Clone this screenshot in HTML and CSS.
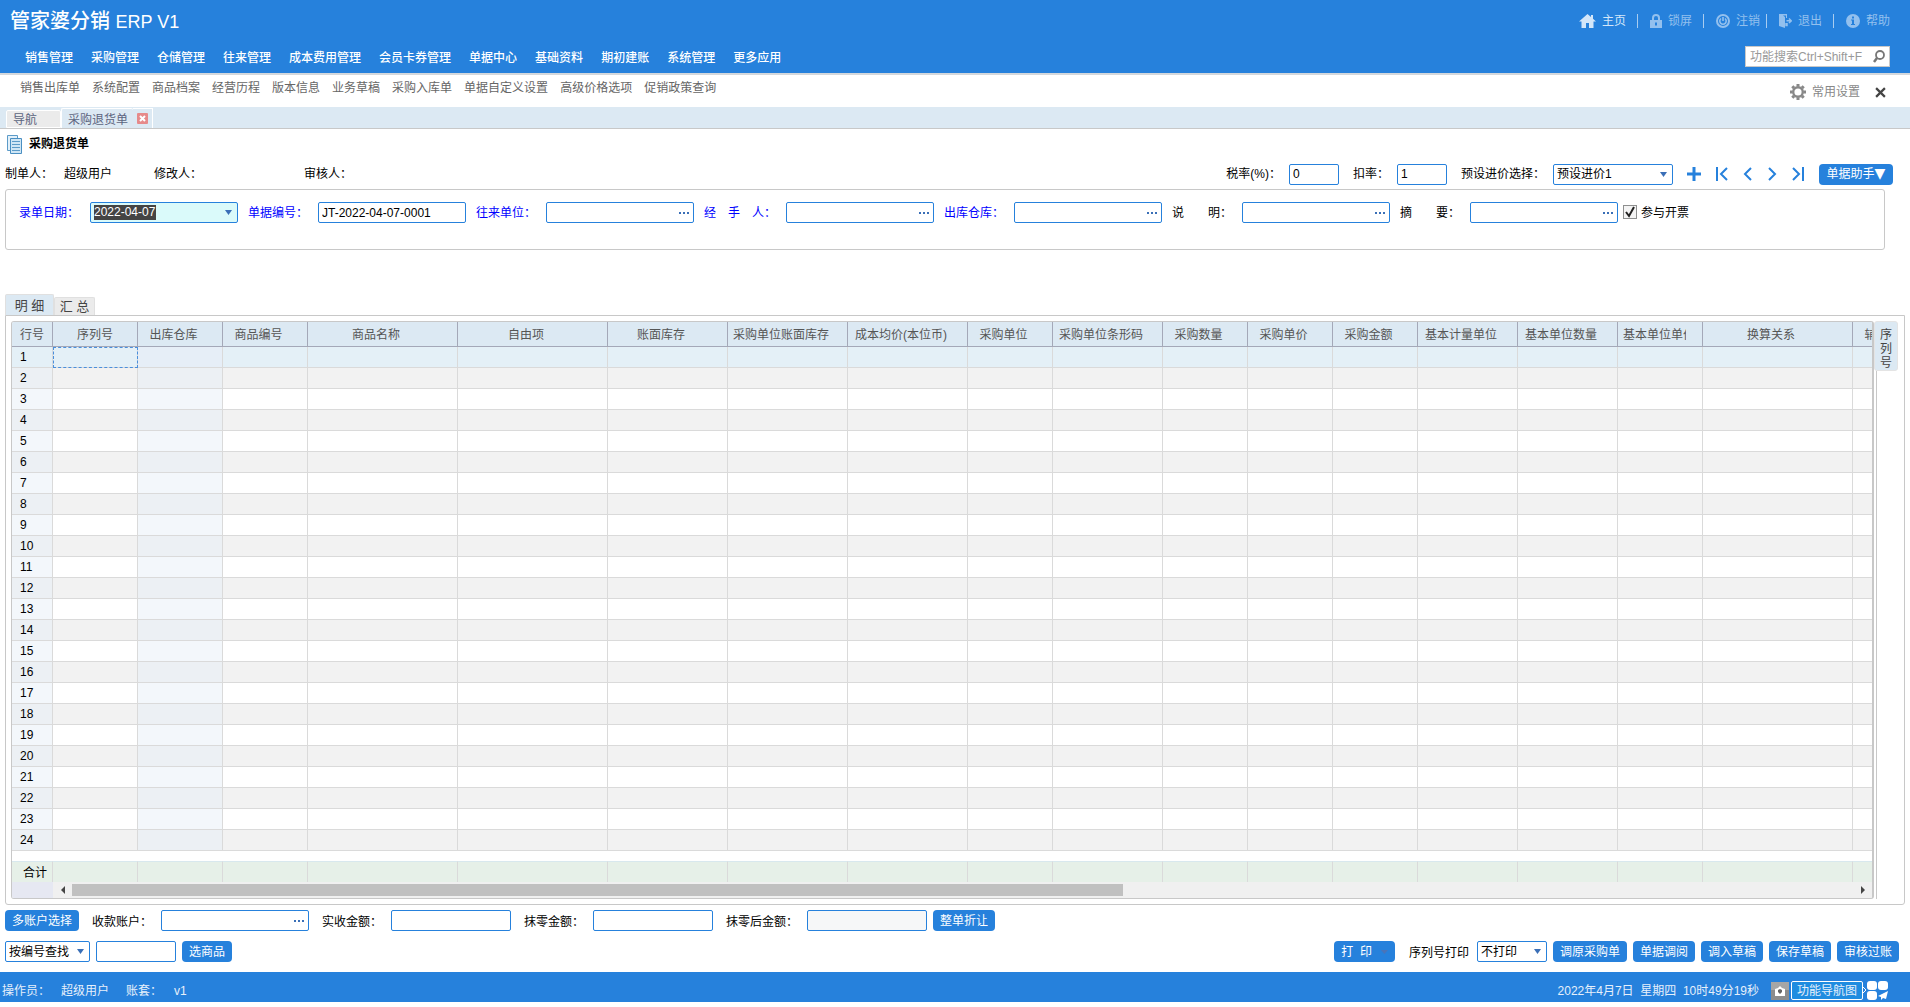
FILE: index.html
```
<!DOCTYPE html>
<html lang="zh-CN">
<head>
    <meta charset="UTF-8">
    <meta name="viewport" content="width=device-width, initial-scale=1.0">
    <title>管家婆分销 ERP V1</title>
    <link rel="stylesheet" href="styles.css">
</head>
<body>
    <!-- Header -->
    <header class="header">
        <div class="header-row brand-row">
            <h1 class="brand">管家婆分销 <span>ERP V1</span></h1>
            <nav class="user-links">
                <a href="#" class="active"><svg width="17" height="14" viewBox="0 0 17 14"><path fill="currentColor" d="M8.5 0 0 7.5h2.5V14H7V9h3v5h4.500V7.500H17L14 4.800V1h-2v2z"/></svg>主页</a>
                <a href="#"><svg width="12" height="14" viewBox="0 0 12 14"><path fill="none" stroke="currentColor" stroke-width="2" d="M3 7V4a3 3 0 0 1 6 0v3"/><path fill="currentColor" fill-rule="evenodd" d="M0 6h12v8H0zm5 2.500v3h2v-3z"/></svg>锁屏</a>
                <a href="#"><svg width="14" height="14" viewBox="0 0 14 14"><circle cx="7" cy="7" r="6" fill="none" stroke="currentColor" stroke-width="2"/><path fill="none" stroke="currentColor" stroke-width="1.600" d="M5 4.500a3.200 3.200 0 1 0 4 0M7 3v4"/></svg>注销</a>
                <a href="#" class="tight"><svg width="13" height="14" viewBox="0 0 13 14"><path fill="currentColor" d="M0 0h8v4H7V1.500H4L6 3v11l-6-2z"/><path fill="none" stroke="currentColor" stroke-width="1.500" d="M7 9v2.500h1V9M7.500 6.800H12M10 4.500l2.300 2.300L10 9"/></svg>退出</a>
                <a href="#"><svg width="14" height="14" viewBox="0 0 14 14"><circle cx="7" cy="7" r="7" fill="currentColor"/><path fill="#2681dc" d="M6 2.500h2v2H6zM5 5.500h3V10h1v1H5v-1h1V6.500H5z"/></svg>帮助</a>
            </nav>
        </div>
        <div class="header-row">
            <nav class="main-menu">
                <a href="#">销售管理</a>
                <a href="#">采购管理</a>
                <a href="#">仓储管理</a>
                <a href="#">往来管理</a>
                <a href="#">成本费用管理</a>
                <a href="#">会员卡券管理</a>
                <a href="#">单据中心</a>
                <a href="#">基础资料</a>
                <a href="#">期初建账</a>
                <a href="#">系统管理</a>
                <a href="#">更多应用</a>
            </nav>
            <div class="search">
                <input type="text" placeholder="功能搜索Ctrl+Shift+F" aria-label="功能搜索">
                <button type="button" aria-label="搜索"><svg width="12" height="13" viewBox="0 0 12 13"><circle cx="7" cy="5" r="4" fill="none" stroke="#777" stroke-width="1.800"/><path stroke="#777" stroke-width="2.500" d="M4 8 1 12"/></svg></button>
            </div>
        </div>
    </header>

    <!-- Shortcuts -->
    <div class="toolbar">
        <nav class="shortcuts">
            <a href="#">销售出库单</a>
            <a href="#">系统配置</a>
            <a href="#">商品档案</a>
            <a href="#">经营历程</a>
            <a href="#">版本信息</a>
            <a href="#">业务草稿</a>
            <a href="#">采购入库单</a>
            <a href="#">单据自定义设置</a>
            <a href="#">高级价格选项</a>
            <a href="#">促销政策查询</a>
        </nav>
        <div class="toolbar-right">
            <a href="#"><svg width="16" height="16" viewBox="0 0 16 16"><circle cx="8" cy="8" r="4.800" fill="none" stroke="#888" stroke-width="2.400"/><path stroke="#888" stroke-width="3" d="M8 0v2.500M8 13.500V16M0 8h2.500M13.500 8H16M2.300 2.300l1.800 1.800M11.900 11.900l1.800 1.800M2.300 13.700l1.800-1.800M11.900 4.100l1.800-1.800"/></svg>常用设置</a>
            <button type="button" aria-label="关闭"><svg width="11" height="11" viewBox="0 0 10 10"><path stroke="#444" stroke-width="2" d="M1 1l8 8M9 1 1 9"/></svg></button>
        </div>
    </div>

    <!-- Page tabs -->
    <div class="page-tabs">
        <a href="#" class="page-tab">导航</a>
        <a href="#" class="page-tab current">采购退货单</a>
        <button type="button" class="tab-close" aria-label="关闭采购退货单"><svg width="11" height="11" viewBox="0 0 11 11"><rect width="11" height="11" rx="1" fill="#e68a8a"/><path stroke="#fff" stroke-width="2" d="M3 3l5 5M8 3 3 8"/></svg></button>
    </div>

    <main>
        <div class="doc-title">
            <svg width="15" height="19" viewBox="0 0 15 19"><path fill="#e3f1fa" stroke="#5c9bc8" d="M.5.500h10v15H.5z"/><path fill="#cfe6f5" stroke="#4a8fc2" d="M3.500 3.500h11v15h-11z"/><path stroke="#5c9bc8" d="M5 6.500h8M5 9.500h8M5 12.500h8M5 15.500h8"/></svg>
            <h2>采购退货单</h2>
        </div>

        <div class="doc-info">
            <div class="makers">
                <span>制单人：</span>
                <span class="maker-name">超级用户</span>
                <span class="editor">修改人：</span>
                <span>审核人：</span>
            </div>
            <div class="doc-options">
                <label for="tax">税率(%)：</label>
                <input type="text" id="tax" class="box short" value="0">
                <label for="discount">扣率：</label>
                <input type="text" id="discount" class="box short" value="1">
                <label for="price">预设进价选择：</label>
                <select id="price" class="box price"><option>预设进价1</option></select>
                <div class="pager">
                    <button type="button" aria-label="新增"><svg width="14" height="14" viewBox="0 0 14 14"><path stroke="#2681dc" stroke-width="3" d="M7 0v14M0 7h14"/></svg></button>
                    <button type="button" aria-label="第一张"><svg width="14" height="14" viewBox="0 0 14 14"><path fill="none" stroke="#2681dc" stroke-width="2" d="M2 0v14M12 1 6 7l6 6"/></svg></button>
                    <button type="button" aria-label="上一张"><svg width="10" height="14" viewBox="0 0 10 14"><path fill="none" stroke="#2681dc" stroke-width="2" d="M8 1 2 7l6 6"/></svg></button>
                    <button type="button" aria-label="下一张"><svg width="10" height="14" viewBox="0 0 10 14"><path fill="none" stroke="#2681dc" stroke-width="2" d="m2 1 6 6-6 6"/></svg></button>
                    <button type="button" aria-label="最后一张"><svg width="14" height="14" viewBox="0 0 14 14"><path fill="none" stroke="#2681dc" stroke-width="2" d="M12 0v14M2 1l6 6-6 6"/></svg></button>
                </div>
                <button type="button" class="btn helper">单据助手<span>▼</span></button>
            </div>
        </div>

        <!-- Document form -->
        <form class="doc-form">
            <label for="date" class="required">录单日期：</label>
            <div class="box field date">
                <input type="text" id="date" value="2022-04-07">
                <button type="button" class="drop" aria-label="选择日期"></button>
            </div>
            <label for="number" class="required">单据编号：</label>
            <div class="box field"><input type="text" id="number" value="JT-2022-04-07-0001"></div>
            <label for="partner" class="required">往来单位：</label>
            <div class="box field"><input type="text" id="partner"><button type="button" class="more" aria-label="选择往来单位"></button></div>
            <label for="handler" class="required spaced wide"><span>经</span><span>手</span><span>人：</span></label>
            <div class="box field"><input type="text" id="handler"><button type="button" class="more" aria-label="选择经手人"></button></div>
            <label for="store" class="required">出库仓库：</label>
            <div class="box field"><input type="text" id="store"><button type="button" class="more" aria-label="选择出库仓库"></button></div>
            <label for="note" class="spaced"><span>说</span><span>明：</span></label>
            <div class="box field"><input type="text" id="note"><button type="button" class="more" aria-label="选择说明"></button></div>
            <label for="summary" class="spaced"><span>摘</span><span>要：</span></label>
            <div class="box field"><input type="text" id="summary"><button type="button" class="more" aria-label="选择摘要"></button></div>
            <div class="invoice">
                <input type="checkbox" id="invoice" checked>
                <label for="invoice">参与开票</label>
            </div>
        </form>

        <!-- Detail grid -->
        <div class="detail-tabs">
            <button type="button" class="detail-tab current">明 细</button>
            <button type="button" class="detail-tab">汇 总</button>
        </div>
        <div class="detail">
            <div class="grid">
                <div class="grid-view">
                    <table>
                        <colgroup>
                            <col class="c-no"><col class="c-s"><col class="c-s"><col class="c-s"><col class="c-xl"><col class="c-xl"><col class="c-l"><col class="c-l"><col class="c-l"><col class="c-s"><col class="c-code"><col class="c-s"><col class="c-s"><col class="c-s"><col class="c-m"><col class="c-m"><col class="c-s"><col class="c-xl"><col class="c-s">
                        </colgroup>
                        <thead>
                            <tr>
                                <th>行号</th>
                                <th>序列号</th>
                                <th>出库仓库</th>
                                <th>商品编号</th>
                                <th>商品名称</th>
                                <th>自由项</th>
                                <th>账面库存</th>
                                <th>采购单位账面库存</th>
                                <th>成本均价(本位币)</th>
                                <th>采购单位</th>
                                <th>采购单位条形码</th>
                                <th>采购数量</th>
                                <th>采购单价</th>
                                <th>采购金额</th>
                                <th>基本计量单位</th>
                                <th>基本单位数量</th>
                                <th><div class="clip">基本单位单价</div></th>
                                <th>换算关系</th>
                                <th>辅助数量</th>
                            </tr>
                        </thead>
                        <tbody id="rows"></tbody>
                        <tfoot>
                            <tr id="total"><th>合计</th></tr>
                        </tfoot>
                    </table>
                </div>
                <div class="scrollbar">
                    <div class="scroll-corner"></div>
                    <button type="button" class="scroll-arrow" aria-label="向左"><svg width="4" height="8" viewBox="0 0 4 8"><path fill="#444" d="M4 0v8L0 4z"/></svg></button>
                    <div class="scroll-track"><div class="scroll-thumb"></div></div>
                    <button type="button" class="scroll-arrow" aria-label="向右"><svg width="4" height="8" viewBox="0 0 4 8"><path fill="#444" d="M0 0v8l4-4z"/></svg></button>
                </div>
            </div>
            <div class="side">
                <button type="button" class="side-tab">序列号</button>
                <div class="side-line"></div>
            </div>
        </div>

        <!-- Payment row -->
        <div class="bottom-row">
            <button type="button" class="btn">多账户选择</button>
            <label for="account">收款账户：</label>
            <div class="box field"><input type="text" id="account"><button type="button" class="more" aria-label="选择收款账户"></button></div>
            <label for="received">实收金额：</label>
            <input type="text" id="received" class="box amount">
            <label for="round">抹零金额：</label>
            <input type="text" id="round" class="box amount">
            <label for="rounded" class="long">抹零后金额：</label>
            <input type="text" id="rounded" class="box amount" disabled>
            <button type="button" class="btn">整单折让</button>
        </div>

        <!-- Actions row -->
        <div class="bottom-row actions">
            <select class="box find" aria-label="查找方式"><option>按编号查找</option></select>
            <input type="text" class="box keyword" aria-label="查找内容">
            <button type="button" class="btn">选商品</button>
            <button type="button" class="btn print">打&nbsp; 印<span class="print-arrow"></span></button>
            <label for="serial-print" class="serial-label">序列号打印</label>
            <select id="serial-print" class="box serial"><option>不打印</option></select>
            <button type="button" class="btn">调原采购单</button>
            <button type="button" class="btn">单据调阅</button>
            <button type="button" class="btn">调入草稿</button>
            <button type="button" class="btn">保存草稿</button>
            <button type="button" class="btn">审核过账</button>
        </div>
    </main>

    <!-- Footer -->
    <footer class="status">
        <span class="operator">操作员：</span>
        <span class="operator-name">超级用户</span>
        <span class="book">账套：</span>
        <span>v1</span>
        <span class="clock">2022年4月7日&nbsp; 星期四&nbsp; 10时49分19秒</span>
        <button type="button" class="camera" aria-label="截图"><svg width="18" height="18" viewBox="0 0 18 18"><rect width="18" height="18" fill="#8c8c8c"/><rect width="18" height="8" fill="#a6a6a6"/><path fill="#fff" d="M4 7l3-1 2-2 2 2 3 1v7H4z"/><path fill="#666" d="M7 8l2-1 2 1v2l-2 2-2-2z"/></svg></button>
        <button type="button" class="nav-map">功能导航图</button>
        <svg class="nav-icon" width="25" height="19" viewBox="0 0 25 19"><path fill="none" stroke="#fff" d="M0 6l3 3-3 3"/><rect x="4" width="10" height="9" rx="3" fill="#fff"/><rect x="15" width="10" height="9" rx="3" fill="#fff"/><rect x="4" y="10" width="10" height="9" rx="3" fill="#fff"/><path fill="#fff" d="M25 10 15 15l3 1v3l2-2 3 1z"/></svg>
    </footer>

    <script>
        // Build the empty rows of the grid
        const rows = document.getElementById('rows');
        const total = document.getElementById('total');
        const columns = 18;

        for (let i = 1; i <= 24; i++) {
            const tr = rows.insertRow();
            const no = document.createElement('th');
            no.textContent = i;
            tr.appendChild(no);
            for (let c = 0; c < columns; c++) {
                tr.insertCell();
            }
        }

        const gap = rows.insertRow();
        gap.className = 'gap';
        gap.insertCell().colSpan = columns + 1;

        for (let c = 0; c < columns; c++) {
            total.insertCell();
        }
    </script>
</body>
</html>
```
FILE: styles.css
```
/* Reset styles */
* {
    margin: 0;
    padding: 0;
    box-sizing: border-box;
}

body {
    background: #fff;
    color: #000;
}

body,
input,
select,
button {
    font-family: "Liberation Sans", "Noto Sans CJK SC", sans-serif;
    font-size: 12px;
    line-height: 18px;
}

a {
    color: inherit;
    text-decoration: none;
}

button {
    border: 0;
    background: none;
    color: inherit;
    cursor: pointer;
    white-space: nowrap;
}

label,
span {
    white-space: nowrap;
}

svg {
    display: block;
    flex: none;
}

/* Header styles */
.header {
    padding: 0 20px 0 10px;
    background: #2681dc;
    border-bottom: 2px solid #d4d8dc;
    color: #fff;
}

.header-row {
    display: flex;
    justify-content: space-between;
    align-items: center;
    height: 33px;
}

.brand-row {
    height: 40px;
    padding-top: 2px;
}

.brand {
    font-size: 20px;
    font-weight: 500;
    line-height: 24px;
}

.brand span {
    font-size: 18px;
    font-weight: 400;
}

.user-links {
    display: flex;
    align-items: center;
}

.user-links a {
    display: flex;
    align-items: center;
    gap: 6px;
    color: #93c0ee;
}

.user-links a.active {
    color: #d3e6f9;
}

.user-links a + a::before {
    content: "";
    width: 1px;
    height: 14px;
    margin: 0 6px 0 11px;
    background: #a8ccf0;
}

.user-links a.tight::before {
    margin-left: 6px;
}

.main-menu {
    display: flex;
    gap: 18px;
    padding: 2px 0 0 15px;
    font-weight: 500;
}

.search {
    display: flex;
    align-items: center;
    width: 145px;
    height: 21px;
    padding: 0 4px;
    background: #fff;
    border: 1px solid #c8c8c8;
}

.search input {
    flex: 1;
    min-width: 0;
    border: 0;
    outline: 0;
}

.search input::placeholder {
    color: #999;
}

/* Shortcut bar */
.toolbar {
    display: flex;
    justify-content: space-between;
    height: 32px;
    padding: 0 24px 0 20px;
    color: #666;
}

.shortcuts {
    display: flex;
    gap: 12px;
    padding-top: 4px;
}

.toolbar-right {
    display: flex;
    align-items: center;
    gap: 15px;
    padding-top: 2px;
}

.toolbar-right a {
    display: flex;
    align-items: center;
    gap: 6px;
    color: #888;
}

/* Page tabs */
.page-tabs {
    display: flex;
    align-items: flex-end;
    height: 22px;
    padding-left: 6px;
    background: #dce9f3;
    border-bottom: 1px solid #c8c8c8;
    color: #5c6580;
}

.page-tab {
    width: 55px;
    height: 18px;
    padding-left: 6px;
    background: #ebebeb;
    border: 1px solid #fff;
    border-radius: 2px 2px 0 0;
}

.page-tab.current {
    width: 72px;
    height: 20px;
    background: #dce9f3;
    border-right: 0;
    border-bottom: 0;
    line-height: 23px;
}

.tab-close {
    display: flex;
    align-items: center;
    justify-content: center;
    width: 20px;
    height: 20px;
    border-top: 1px solid #fff;
    border-right: 1px solid #fff;
}

/* Document title and info */
.doc-title {
    display: flex;
    align-items: center;
    gap: 7px;
    height: 28px;
    padding: 2px 0 0 7px;
}

.doc-title h2 {
    font-size: 12px;
}

.doc-info {
    display: flex;
    justify-content: space-between;
    align-items: center;
    height: 32px;
    padding: 2px 17px 0 5px;
}

.makers,
.doc-options {
    display: flex;
    align-items: center;
}

.maker-name {
    width: 90px;
    margin-left: 11px;
}

.editor {
    width: 150px;
}

/* Inputs and buttons */
.box {
    height: 21px;
    padding: 0 3px;
    background: #fff;
    border: 1px solid #2681dc;
    border-radius: 2px;
    outline: 0;
    color: #000;
}

input.box:disabled {
    background: #f6f7f8;
}

select.box {
    appearance: none;
    background: #fff url("data:image/svg+xml,%3Csvg xmlns='http://www.w3.org/2000/svg' width='7' height='5'%3E%3Cpath fill='%233a6fb7' d='M0 0h7L3.500 5z'/%3E%3C/svg%3E") no-repeat right 5px center;
}

.btn {
    height: 21px;
    padding: 1px 7px 0;
    background: #2681dc;
    border-radius: 4px;
    color: #fff;
}

.helper {
    width: 74px;
    padding: 0;
}

.helper span {
    font-family: "DejaVu Sans", sans-serif;
    font-size: 14px;
    line-height: 12px;
}

.short {
    width: 50px;
    margin-right: 14px;
}

.price {
    width: 120px;
}

.doc-options label {
    margin-right: 8px;
}

.pager {
    display: flex;
    align-items: center;
    gap: 14px;
    margin: 0 14px;
}

.field {
    display: flex;
    align-items: center;
    width: 148px;
}

.field input {
    flex: 1;
    min-width: 0;
    background: none;
    border: 0;
    outline: 0;
}

.more {
    width: 11px;
    height: 2px;
    background: repeating-linear-gradient(90deg, #3a6fb7 0 2px, transparent 2px 4px);
    background-size: 10px 2px;
    background-repeat: no-repeat;
}

.field.date {
    justify-content: space-between;
    background: #dafafa;
}

.field.date input {
    flex: none;
    width: 62px;
    height: 15px;
    background: #444;
    color: #fff;
    line-height: 15px;
}

.drop {
    width: 7px;
    height: 5px;
    margin-right: 2px;
    background: #3a6fb7;
    clip-path: polygon(0 0, 100% 0, 50% 100%);
}

/* Document form */
.doc-form {
    display: flex;
    align-items: flex-start;
    height: 61px;
    margin: 0 25px 1px 5px;
    padding: 12px 13px;
    border: 1px solid #c8c8c8;
    border-radius: 3px;
}

.doc-form > label {
    width: 70px;
    line-height: 23px;
}

.doc-form > label:first-child {
    width: 71px;
}

.doc-form > label.wide {
    width: 82px;
}

.doc-form > .box {
    margin-right: 10px;
}

.required {
    color: #00f;
}

.spaced {
    display: flex;
    justify-content: space-between;
    padding-right: 10px;
}

.doc-form > .box:nth-last-child(2) {
    margin-right: 5px;
}

.invoice {
    display: flex;
    align-items: center;
    gap: 4px;
}

.invoice input {
    appearance: none;
    width: 14px;
    height: 14px;
    background: #f4f4f4;
    border: 1px solid #8e8f8f;
}

.invoice input:checked {
    background: #f4f4f4 url("data:image/svg+xml,%3Csvg xmlns='http://www.w3.org/2000/svg' width='12' height='12'%3E%3Cpath fill='none' stroke='%23222' stroke-width='2' d='M2 6l3 4 5-9'/%3E%3C/svg%3E") no-repeat center;
}

.invoice label {
    padding-top: 2px;
}

/* Detail grid */
.detail-tabs {
    display: flex;
    align-items: flex-end;
    height: 64px;
    padding-left: 5px;
}

.detail-tab {
    width: 41px;
    height: 18px;
    background: #ebebeb;
    border: 1px solid #e0e0e0;
    border-bottom: 0;
    border-radius: 2px 2px 0 0;
    color: #444;
    font-size: 13px;
}

.detail-tab.current {
    width: 49px;
    height: 21px;
    padding-top: 2px;
    background: #dce9f3;
}

.detail {
    display: flex;
    margin: 0 5px;
    padding: 5px 0 5px 5px;
    border: 1px solid #c8c8c8;
    border-radius: 0 0 3px 3px;
}

.grid {
    flex: 1;
    min-width: 0;
    border: 1px solid #c8c8c8;
    border-right-width: 2px;
    border-radius: 3px;
    overflow: hidden;
}

.grid-view {
    overflow: hidden;
}

table {
    width: 1926px;
    table-layout: fixed;
    border-collapse: separate;
    border-spacing: 0;
}

.c-no { width: 41px; }
.c-s { width: 85px; }
.c-m { width: 100px; }
.c-code { width: 110px; }
.c-l { width: 120px; }
.c-xl { width: 150px; }

th,
td {
    height: 21px;
    border-right: 1px solid #dadada;
    border-bottom: 1px solid #dadada;
    font-weight: 400;
    line-height: 18px;
    white-space: nowrap;
}

thead th {
    height: 25px;
    padding: 2px 13px 0 0;
    background: #dce9f3;
    border-color: #a4a8b8;
    color: #555;
}

thead th:nth-child(-n+2) {
    padding-right: 0;
}

.clip {
    width: 63px;
    margin-left: 5px;
    overflow: hidden;
}

tbody th {
    padding-left: 8px;
    background: #f3f7fb;
    text-align: left;
}

tbody td:nth-child(3) {
    background: #f3f7fb;
}

tbody tr:nth-child(even) td {
    background: #f2f2f2;
}

tbody tr:nth-child(even) th,
tbody tr:nth-child(even) td:nth-child(3) {
    background: #ecf0f4;
}

tbody tr:first-child th,
tbody tr:first-child td {
    background: #e4f0f7;
}

tbody tr:first-child td:nth-child(3) {
    background: #e6eef7;
}

tbody tr:first-child td:nth-child(2) {
    outline: 1px dashed #4a8fdc;
    outline-offset: -1px;
}

tbody tr.gap td {
    height: 10px;
    background: #fff;
    border: 0;
}

tfoot th,
tfoot td {
    height: 21px;
    background: #e6f0e8;
    border-top: 1px solid #d8e8ee;
    border-bottom: 0;
}

tfoot th {
    padding: 1px 5px 0 0;
    text-align: right;
}

.scrollbar {
    display: flex;
    align-items: center;
    height: 16px;
    background: #f0f0f0;
}

.scroll-corner {
    width: 41px;
    height: 16px;
    background: #e6e8f2;
}

.scroll-arrow {
    display: flex;
    justify-content: center;
    width: 19px;
}

.scroll-track {
    flex: 1;
}

.scroll-thumb {
    width: 59%;
    min-width: 20px;
    height: 12px;
    background: #c0c0c0;
}

.side {
    display: flex;
    flex-direction: column;
    width: 30px;
}

.side-tab {
    width: 24px;
    height: 50px;
    padding: 6px 5px 0;
    background: #dce9f3;
    border: 1px solid #e4e4e4;
    border-radius: 3px;
    color: #444;
    line-height: 14px;
    white-space: normal;
}

.side-line {
    flex: 1;
    margin-left: 2px;
    border-left: 1px solid #c8c8c8;
}

/* Bottom rows */
.bottom-row {
    display: flex;
    align-items: center;
    padding: 5px 10px 5px 5px;
}

.bottom-row label {
    width: 69px;
    margin-left: 13px;
    padding-top: 2px;
}

.bottom-row label.long {
    width: 81px;
}

.amount {
    width: 120px;
}

.amount + .btn {
    margin-left: 6px;
}

.bottom-row.actions {
    gap: 6px;
    padding-right: 11px;
    padding-bottom: 10px;
}

.find {
    width: 85px;
}

.keyword {
    width: 80px;
}

.print {
    display: flex;
    align-items: center;
    gap: 9px;
    margin-left: auto;
}

.print-arrow {
    width: 7px;
    height: 4px;
    background: #4a74b8;
    clip-path: polygon(0 0, 100% 0, 50% 100%);
}

.bottom-row .serial-label {
    width: 62px;
    margin-left: 8px;
}

.serial {
    width: 70px;
}

/* Status bar */
.status {
    display: flex;
    align-items: center;
    height: 30px;
    padding: 7px 22px 0 2px;
    background: #2681dc;
    color: #e6f0fb;
}

.operator {
    width: 59px;
}

.operator-name {
    width: 65px;
}

.book {
    width: 48px;
}

.clock {
    margin-left: auto;
}

.camera {
    margin: 0 2px 0 12px;
}

.nav-map {
    width: 72px;
    height: 19px;
    background: #1f8ce0;
    border: 1px solid #fff;
    border-radius: 2px;
    line-height: 16px;
}
```
